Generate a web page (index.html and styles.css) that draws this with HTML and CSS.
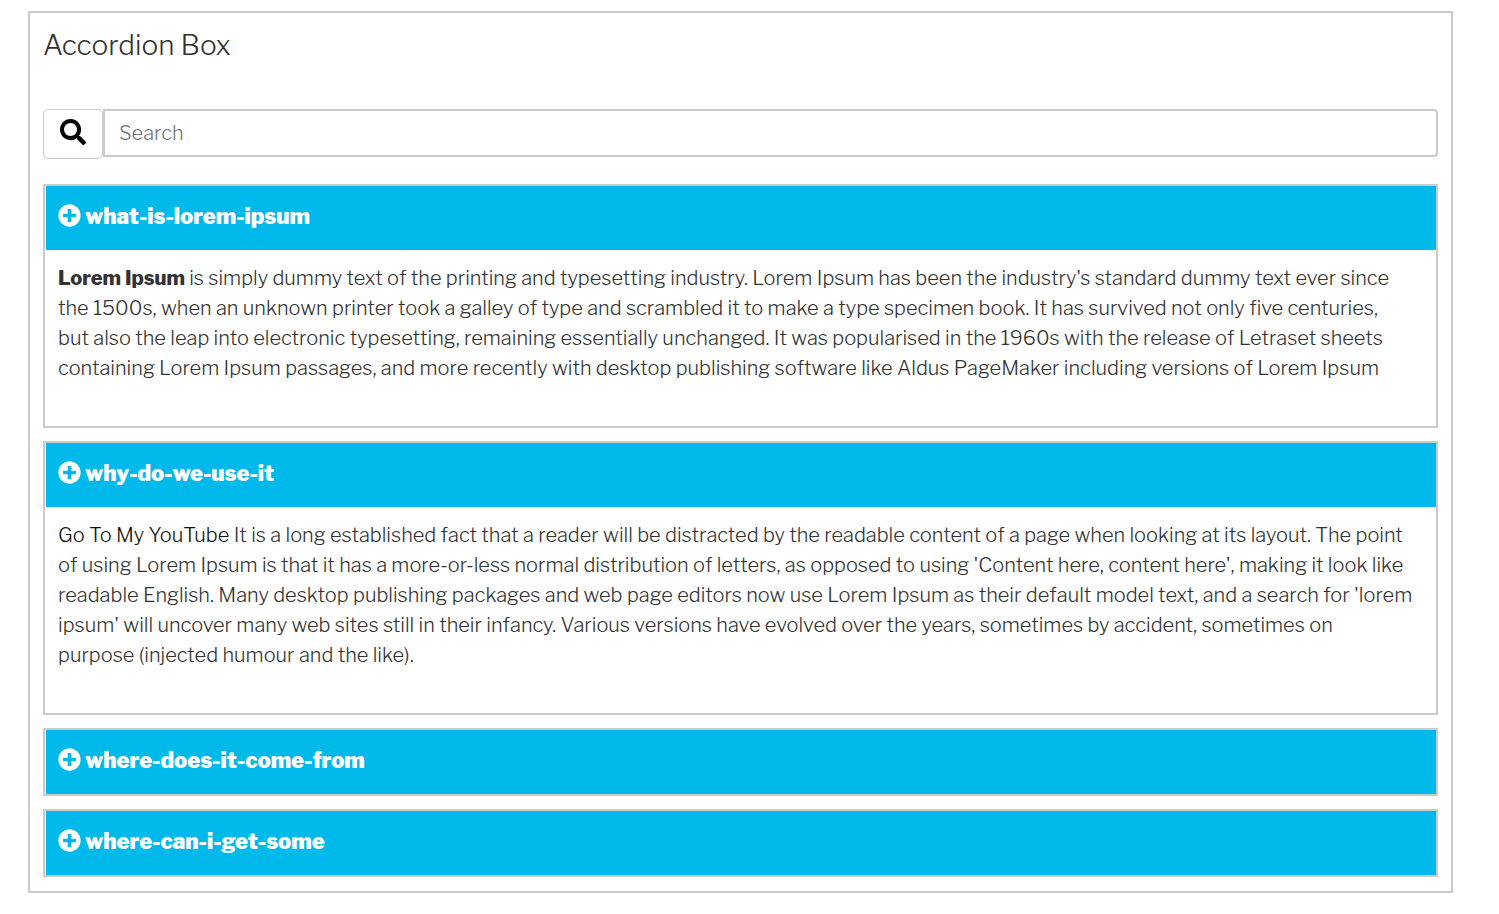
FILE: index.html
```
<!DOCTYPE html>
<html lang="en">
<head>
<meta charset="utf-8">
<meta name="viewport" content="width=device-width, initial-scale=1">
<title>Accordion Box</title>
<link rel="stylesheet" href="styles.css">
</head>
<body>
<svg class="sprite" aria-hidden="true">
  <symbol id="plus-circle" viewBox="0 0 512 512"><path fill="currentColor" d="M256 8C119 8 8 119 8 256s111 248 248 248 248-111 248-248S393 8 256 8zm144 276c0 6.600-5.400 12-12 12h-92v92c0 6.600-5.400 12-12 12h-56c-6.600 0-12-5.400-12-12v-92h-92c-6.600 0-12-5.400-12-12v-56c0-6.600 5.400-12 12-12h92v-92c0-6.600 5.400-12 12-12h56c6.600 0 12 5.400 12 12v92h92c6.600 0 12 5.400 12 12v56z"/></symbol>
</svg>
<main class="panel">
  <h1 class="title">Accordion Box</h1>
  <form class="search">
    <button class="search-button" type="button" aria-label="Search">
      <svg class="search-icon" viewBox="0 0 512 512" aria-hidden="true"><path fill="currentColor" d="M505 442.700L405.300 343c-4.500-4.500-10.600-7-17-7H372c27.600-35.300 44-79.700 44-128C416 93.100 322.900 0 208 0S0 93.100 0 208s93.100 208 208 208c48.300 0 92.700-16.400 128-44v16.300c0 6.400 2.500 12.500 7 17l99.700 99.700c9.400 9.400 24.600 9.400 33.900 0l28.300-28.300c9.400-9.400 9.400-24.600.1-34zM208 336c-70.700 0-128-57.200-128-128 0-70.700 57.200-128 128-128 70.700 0 128 57.200 128 128 0 70.700-57.200 128-128 128z"/></svg>
    </button>
    <input class="search-input" type="text" placeholder="Search" aria-label="Search">
  </form>
  <div class="accordion">
    <section class="item">
      <h2 class="heading"><button class="toggle" type="button" aria-expanded="true"><svg class="plus" aria-hidden="true"><use href="#plus-circle"/></svg>what-is-lorem-ipsum</button></h2>
      <p class="content"><strong>Lorem Ipsum</strong> is simply dummy text of the printing and typesetting industry. Lorem Ipsum has been the industry's standard dummy text ever since the 1500s, when an unknown printer took a galley of type and scrambled it to make a type specimen book. It has survived not only five centuries,<br>but also the leap into electronic typesetting, remaining essentially unchanged. It was popularised in the 1960s with the release of Letraset sheets containing Lorem Ipsum passages, and more recently with desktop publishing software like Aldus PageMaker including versions of Lorem Ipsum</p>
    </section>
    <section class="item">
      <h2 class="heading"><button class="toggle" type="button" aria-expanded="true"><svg class="plus" aria-hidden="true"><use href="#plus-circle"/></svg>why-do-we-use-it</button></h2>
      <p class="content"><a class="link" href="#">Go To My YouTube</a> It is a long established fact that a reader will be distracted by the readable content of a page when looking at its layout. The point of using Lorem Ipsum is that it has a more-or-less normal distribution of letters, as opposed to using 'Content here, content here', making it look like readable English. Many desktop publishing packages and web page editors now use Lorem Ipsum as their default model text, and a search for 'lorem ipsum' will uncover many web sites still in their infancy. Various versions have evolved over the years, sometimes by accident, sometimes on<br>purpose (injected humour and the like).</p>
    </section>
    <section class="item">
      <h2 class="heading"><button class="toggle" type="button" aria-expanded="false"><svg class="plus" aria-hidden="true"><use href="#plus-circle"/></svg>where-does-it-come-from</button></h2>
    </section>
    <section class="item">
      <h2 class="heading"><button class="toggle" type="button" aria-expanded="false"><svg class="plus" aria-hidden="true"><use href="#plus-circle"/></svg>where-can-i-get-some</button></h2>
    </section>
  </div>
</main>
</body>
</html>
```
FILE: styles.css
```
* { box-sizing: border-box; }
body {
  margin: 0;
  padding: 11px 46px 20px 28px;
  background: #fff;
  color: #333;
  font-family: "Libre Franklin", Inter, "Liberation Sans", sans-serif;
  font-size: 20px;
  font-weight: 300;
  line-height: 30px;
}
.sprite { display: none; }
.panel { border: 2px solid #cacaca; padding: 13px 13px 14px; }
.title { margin: 0 0 45px; font-size: 28px; font-weight: 300; line-height: 38px; }
.search { display: flex; align-items: flex-start; margin-bottom: 25px; }
.search-button {
  display: flex;
  align-items: center;
  justify-content: center;
  width: 60px;
  height: 50px;
  padding: 0 0 4px;
  border: 1px solid #cacaca;
  border-radius: 5px;
  background: #fff;
  color: #000;
}
.search-icon { width: 26px; height: 26px; }
.search-input {
  flex: 1;
  min-width: 0;
  height: 48px;
  padding: 0 14px;
  border: 2px solid #cacaca;
  border-radius: 0 4px 4px 0;
  font: inherit;
  color: #333;
}
.search-input::placeholder { color: #6c757d; opacity: 1; }
.accordion { display: flex; flex-direction: column; gap: 13px; }
.item { border: 2px solid #cacaca; padding-left: 1px; }
.heading { margin: 0; }
.toggle {
  display: flex;
  align-items: center;
  gap: 4px;
  width: 100%;
  height: 64px;
  padding: 0 12px 4px;
  border: 0;
  background: #00b9eb;
  color: #fff;
  font: inherit;
  font-size: 22px;
  font-weight: 900;
  text-align: left;
}
.plus { width: 23px; height: 23px; margin-bottom: 2px; }
.content { margin: 0; padding: 13px 12px 43px; }
.content strong { font-weight: 800; }
.link { color: #111; text-decoration: none; }
```
